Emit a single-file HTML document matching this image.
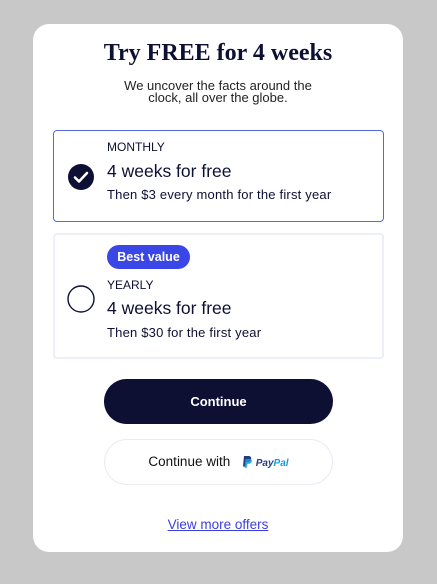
<!DOCTYPE html>
<html><head><style>
*{margin:0;padding:0;box-sizing:border-box}
body{width:437px;height:584px;background:#c8c8c8;font-family:"Liberation Sans",sans-serif;position:relative;overflow:hidden;color:#0d1033}
.card{position:absolute;left:33px;top:24px;width:370px;height:528px;background:#fff;border-radius:16px}
h1{position:absolute;top:40px;left:33px;width:370px;text-align:center;font-family:"Liberation Serif",serif;font-size:24px;font-weight:bold;color:#0d1033}
.sub{position:absolute;top:80px;left:33px;width:370px;text-align:center;font-size:13px;line-height:12px;color:#222}
.box{position:absolute;left:53px;width:331px;border-radius:4px}
.b1{top:130px;height:92px;border:1px solid #5566ee}
.b2{top:233px;height:126px;border:2px solid #eceef8}
.t{position:absolute;left:107px;color:#0d1033;white-space:nowrap}
.sm{font-size:12px}
.big{font-size:17.5px}
.d{font-size:13px;letter-spacing:.2px}
.badge{position:absolute;left:107px;top:245px;width:83px;height:24px;border-radius:12px;background:#3a47e6;color:#fff;font-size:12.5px;font-weight:bold;text-align:center;line-height:24px}
.btn{position:absolute;left:104px;width:229px;border-radius:23px;text-align:center}
.c1{top:379px;height:45px;background:#0d1033;color:#fff;font-size:13px;line-height:45px;font-weight:bold}
.c2{top:439px;height:46px;border:1px solid #ebeaf5;font-size:13.5px;line-height:44px;color:#111}
.link{position:absolute;top:517px;left:33px;width:370px;text-align:center;font-size:13.5px;color:#3b3fe0;text-decoration:underline}
</style></head><body>
<div class="card"></div>
<h1>Try FREE for 4 weeks</h1>
<div class="sub">We uncover the facts around the<br>clock, all over the globe.</div>
<div class="box b1"></div>
<svg style="position:absolute;left:67px;top:163px" width="28" height="28" viewBox="0 0 28 28"><circle cx="14" cy="14" r="13" fill="#0d1033"/><path d="M8 14.5l4 4 8-8.5" stroke="#fff" stroke-width="2.6" fill="none" stroke-linecap="round" stroke-linejoin="round"/></svg>
<div class="t sm" style="top:140px">MONTHLY</div>
<div class="t big" style="top:161px">4 weeks for free</div>
<div class="t d" style="top:187px">Then $3 every month for the first year</div>
<div class="box b2"></div>
<div class="badge">Best value</div>
<svg style="position:absolute;left:66px;top:284px" width="30" height="30" viewBox="0 0 30 30"><circle cx="15" cy="15" r="13" fill="none" stroke="#0d1033" stroke-width="1.4"/></svg>
<div class="t sm" style="top:278px">YEARLY</div>
<div class="t big" style="top:298px">4 weeks for free</div>
<div class="t d" style="top:325px">Then $30 for the first year</div>
<div class="btn c1">Continue</div>
<div class="btn c2">Continue with <span style="display:inline-block;width:8px"></span><svg width="10" height="12" viewBox="0 0 10 12" style="vertical-align:-2px"><path d="M2 0h4.5c2 0 3 1.2 2.6 3-.4 2-1.8 3-3.8 3H4l-.8 4.5H1z" fill="#253b80"/><path d="M3.5 3h4.5c1.5 0 2 1 1.7 2.3-.3 1.6-1.5 2.5-3 2.5H5.5l-.7 4H2.5z" fill="#179bd7" opacity=".9"/></svg> <span style="font-weight:bold;font-style:italic;font-size:10px;color:#253b80">Pay<span style="color:#179bd7">Pal</span></span></div>
<div class="link">View more offers</div>
</body></html>
